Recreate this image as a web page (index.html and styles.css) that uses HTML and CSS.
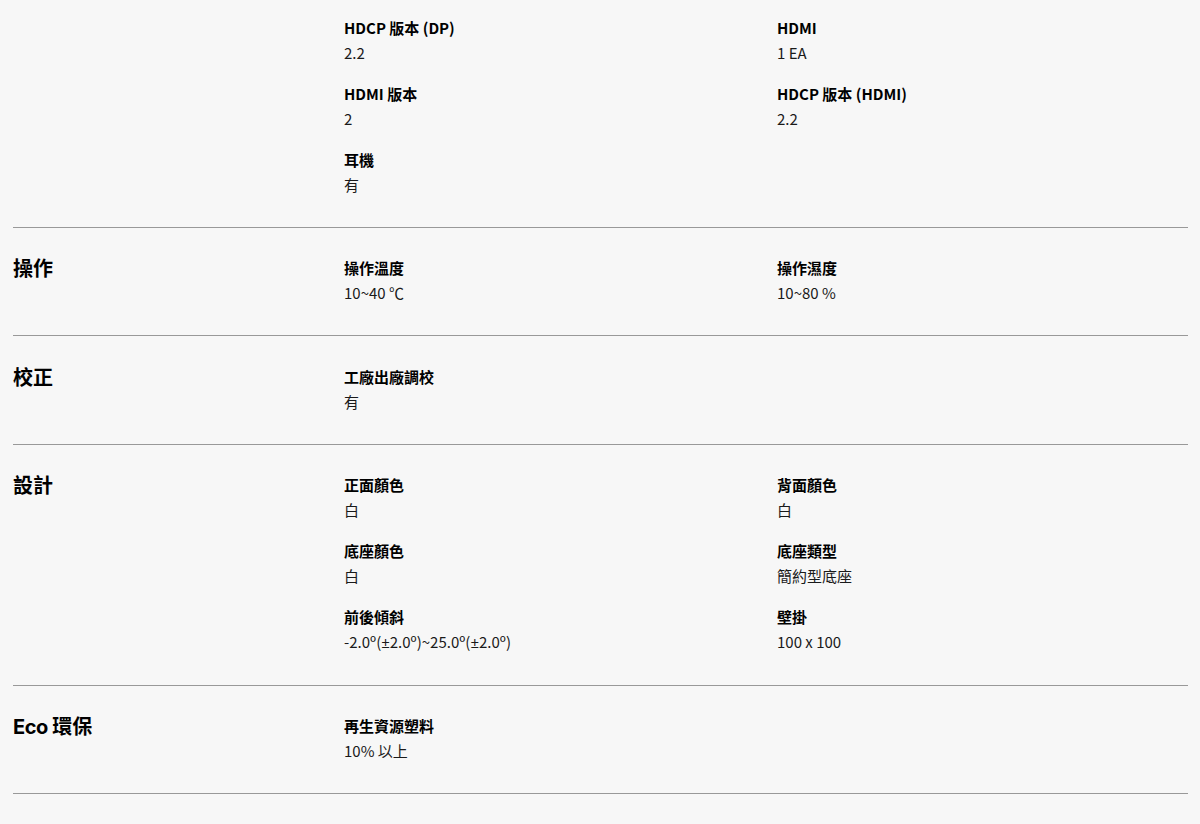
FILE: index.html
```html
<!DOCTYPE html>
<html lang="zh-Hant">
<head>
<meta charset="utf-8">
<title>規格</title>
<link rel="stylesheet" href="styles.css">
</head>
<body>
<div class="specs">
  <section class="spec spec--first">
    <h3 class="spec__title"></h3>
    <div class="spec__items">
      <div class="item"><div class="item__label">HDCP 版本 (DP)</div><div class="item__value">2.2</div></div>
      <div class="item"><div class="item__label">HDMI</div><div class="item__value">1 EA</div></div>
      <div class="item"><div class="item__label">HDMI 版本</div><div class="item__value">2</div></div>
      <div class="item"><div class="item__label">HDCP 版本 (HDMI)</div><div class="item__value">2.2</div></div>
      <div class="item"><div class="item__label">耳機</div><div class="item__value">有</div></div>
    </div>
  </section>
  <section class="spec">
    <h3 class="spec__title">操作</h3>
    <div class="spec__items">
      <div class="item"><div class="item__label">操作溫度</div><div class="item__value">10~40 ℃</div></div>
      <div class="item"><div class="item__label">操作濕度</div><div class="item__value">10~80 %</div></div>
    </div>
  </section>
  <section class="spec">
    <h3 class="spec__title">校正</h3>
    <div class="spec__items">
      <div class="item"><div class="item__label">工廠出廠調校</div><div class="item__value">有</div></div>
    </div>
  </section>
  <section class="spec">
    <h3 class="spec__title">設計</h3>
    <div class="spec__items">
      <div class="item"><div class="item__label">正面顏色</div><div class="item__value">白</div></div>
      <div class="item"><div class="item__label">背面顏色</div><div class="item__value">白</div></div>
      <div class="item"><div class="item__label">底座顏色</div><div class="item__value">白</div></div>
      <div class="item"><div class="item__label">底座類型</div><div class="item__value">簡約型底座</div></div>
      <div class="item"><div class="item__label">前後傾斜</div><div class="item__value">-2.0º(<span class="sym">±</span>2.0º)~25.0º(<span class="sym">±</span>2.0º)</div></div>
      <div class="item"><div class="item__label">壁掛</div><div class="item__value">100 x 100</div></div>
    </div>
  </section>
  <section class="spec">
    <h3 class="spec__title"><span class="latin">Eco</span> 環保</h3>
    <div class="spec__items">
      <div class="item"><div class="item__label">再生資源塑料</div><div class="item__value">10% 以上</div></div>
    </div>
  </section>
</div>
</body>
</html>
```
FILE: styles.css
```css
html, body {
  margin: 0;
  padding: 0;
  background: #f7f7f7;
}
body {
  font-family: "Noto Sans CJK TC", sans-serif;
  color: #000;
  height: 824px;
  overflow: hidden;
}
.specs {
  padding: 0 12px 0 13px;
}
.spec {
  display: flex;
  border-bottom: 1px solid #999;
  padding: 27.5px 0 30px;
}
.spec--first {
  padding-top: 15px;
}
.spec__title {
  margin: 0;
  width: 331px;
  flex: none;
  font-family: "Noto Sans CJK TC", sans-serif;
  font-size: 20px;
  font-weight: 700;
  line-height: 25px;
}
.spec__title .latin {
  font-family: "Inter", "Noto Sans", sans-serif;
  font-weight: 700;
  letter-spacing: -0.5px;
}
.spec__items {
  flex: 1;
  display: grid;
  grid-template-columns: 433px 1fr;
  row-gap: 15.75px;
}
.item__label {
  font-family: "Noto Sans CJK TC", sans-serif;
  font-size: 15px;
  font-weight: 700;
  line-height: 25px;
}
.item__value {
  font-family: "Noto Sans CJK TC", sans-serif;
  font-size: 15px;
  line-height: 25px;
  color: #1a1a1a;
}
.sym {
  font-family: "Noto Sans", sans-serif;
}
```
